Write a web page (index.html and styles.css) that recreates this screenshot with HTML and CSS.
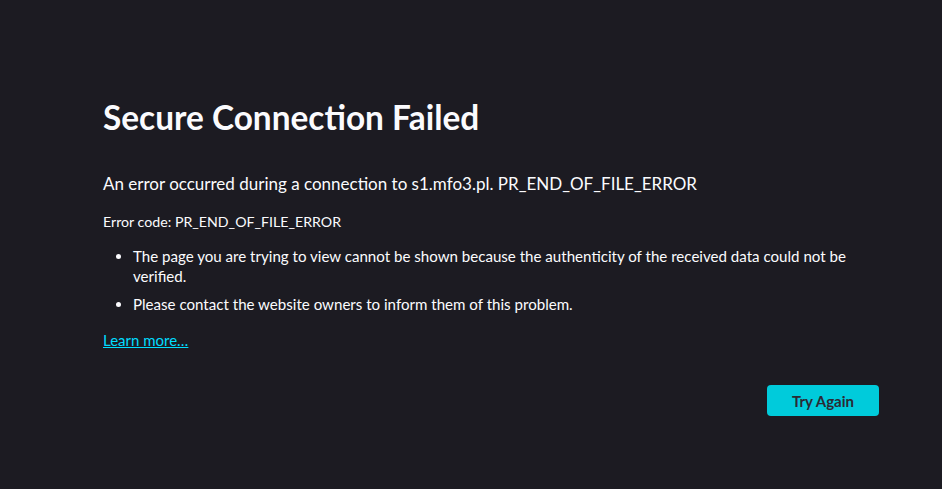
FILE: index.html
```html
<!DOCTYPE html>
<html lang="en">
<head>
<meta charset="UTF-8">
<meta name="viewport" content="width=device-width, initial-scale=1.0">
<title>Problem loading page</title>
<link rel="stylesheet" href="styles.css">
</head>
<body>

<div class="container">
    <h1 class="title">Secure Connection Failed</h1>
    <p class="short-desc">An error occurred during a connection to s1.mfo3.pl. PR_END_OF_FILE_ERROR</p>
    <p class="error-code">Error code: PR_END_OF_FILE_ERROR</p>
    <ul class="long-desc">
        <li>The page you are trying to view cannot be shown because the authenticity of the received data could not be verified.</li>
        <li>Please contact the website owners to inform them of this problem.</li>
    </ul>
    <a class="learn-more" href="#">Learn more…</a>
    <div class="button-row">
        <button class="primary">Try Again</button>
    </div>
</div>

</body>
</html>
```
FILE: styles.css
```css
html, body {
    margin: 0;
    padding: 0;
    height: 100%;
    background-color: #1c1b22;
}

body {
    font-family: Lato, "Open Sans", sans-serif;
    color: #fbfbfe;
    font-size: 15px;
}

.container {
    width: 776px;
    padding: 97px 0 0 103px;
}

.title {
    font-size: 33.4px;
    font-weight: 700;
    line-height: 40px;
    margin: 0 0 35px 0;
}

.short-desc {
    font-size: 17px;
    line-height: 24px;
    margin: 0 0 15px 0;
}

.error-code {
    font-size: 14.2px;
    line-height: 22px;
    margin: 0 0 13px 0;
}

.long-desc {
    margin: 0 0 16px 0;
    padding-left: 30px;
    line-height: 20px;
    font-size: 15.1px;
}

.long-desc li {
    margin-bottom: 8px;
}

.learn-more {
    color: #00ddff;
    display: inline-block;
    line-height: 20px;
}

.button-row {
    display: flex;
    justify-content: flex-end;
    margin-top: 35px;
}

.primary {
    font-family: inherit;
    font-size: 15px;
    font-weight: 700;
    background-color: #00cbdb;
    color: #2b2a33;
    border: none;
    border-radius: 4px;
    padding: 0 24px;
    height: 31px;
    min-width: 112px;
    cursor: pointer;
}
```
